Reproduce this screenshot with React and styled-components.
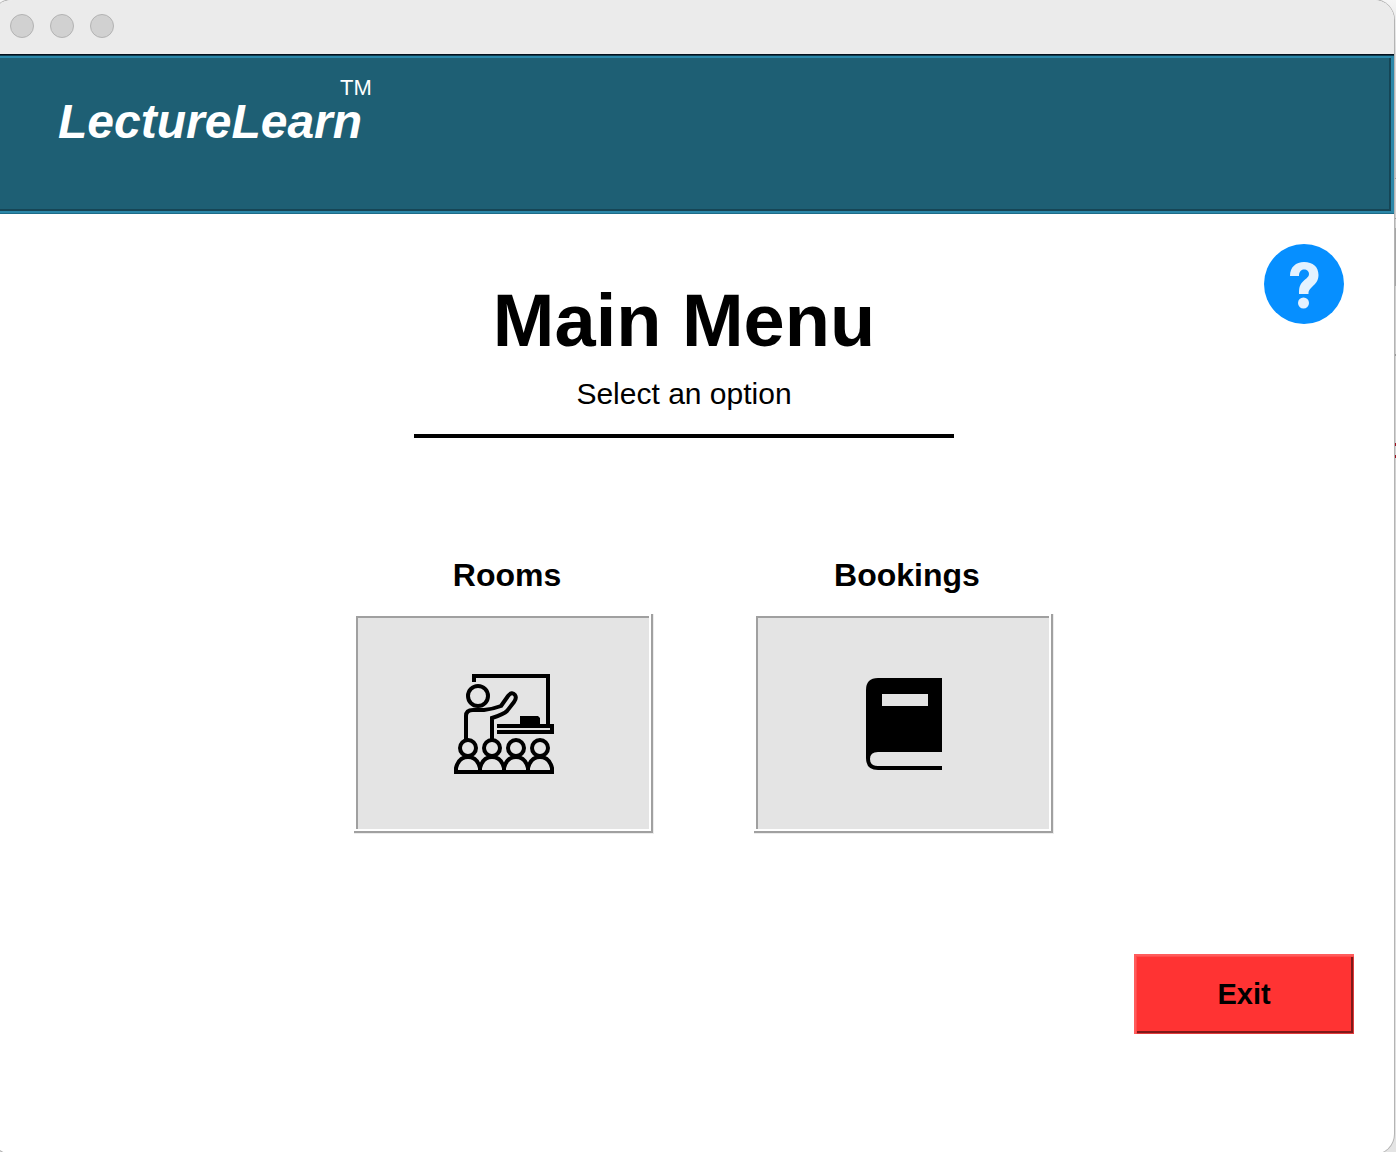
import React from "react";
import styled, { createGlobalStyle } from "styled-components";

const GlobalStyle = createGlobalStyle`
  * { box-sizing: border-box; }
  html { overflow: hidden; }
  body {
    margin: 0;
    overflow: hidden;
    background: linear-gradient(
      #f6f6f6 0, #dcdcdc 54px, #c4c4c4 178px,
      #9a9a9a 178px, #9a9a9a 179px, #cfcfcf 179px, #cfcfcf 218px,
      #9a9a9a 218px, #9a9a9a 219px, #cfcfcf 219px, #cfcfcf 228px,
      #a6a6a6 228px, #a6a6a6 286px, #cfcfcf 286px, #cfcfcf 354px,
      #9a9a9a 354px, #9a9a9a 356px, #d2d2d2 356px, #d2d2d2 443px,
      #a01020 443px, #a01020 446px, #d2d2d2 446px, #d2d2d2 455px,
      #a01020 455px, #a01020 458px, #d2d2d2 458px, #e4e4e4 1152px
    );
    font-family: "Liberation Sans", Arial, Helvetica, sans-serif;
    color: #000;
  }
`;

const Window = styled.div`
  display: flex;
  flex-direction: column;
  min-height: calc(100vh + 2px);
  margin: 0 2px 0 -8px;
  border-radius: 20px;
  overflow: hidden;
  background: #fff;
  box-shadow: 0 0 0 1px #b4b4b4;
`;

const TitleBar = styled.div`
  display: flex;
  align-items: center;
  gap: 16px;
  height: 54px;
  padding: 0 18px 2px;
  background: #ebebeb;
`;

const WindowButton = styled.button`
  width: 24px;
  height: 24px;
  padding: 0;
  border: 1px solid #b3b3b3;
  border-radius: 50%;
  background: #d1d1d1;
`;

const Banner = styled.header`
  height: 160px;
  padding: 24px 66px;
  background: #1e5f74;
  color: #fff;
  box-shadow:
    inset 0 1px #040f1c,
    inset 0 2px #0f3a4c,
    inset 0 -1px #1d6c88,
    inset -3px -3px #2b87a9,
    inset 0 4px #2b87a9,
    inset -5px -5px #164555;
`;

const Brand = styled.div`
  display: flex;
  align-items: flex-start;
`;

const BrandName = styled.span`
  padding-top: 16px;
  font-size: 48px;
  line-height: 56px;
  font-weight: 700;
  font-style: italic;
`;

const Trademark = styled.span`
  margin-left: -22px;
  font-size: 22px;
  line-height: 20px;
`;

const Main = styled.main`
  display: flex;
  flex-direction: column;
`;

const Hero = styled.section`
  display: grid;
  padding: 30px 50px 0 0;
`;

const HelpButton = styled.button`
  grid-area: 1 / 1;
  justify-self: end;
  align-self: start;
  width: 80px;
  height: 80px;
  padding: 0;
  border: 0;
  border-radius: 50%;
  background: #068fff;

  svg { display: block; }
`;

const Heading = styled.div`
  grid-area: 1 / 1;
  justify-self: center;
  width: 540px;
  margin-left: 32px;
  padding-top: 34px;
  border-bottom: 4px solid #000;
  text-align: center;
`;

const Title = styled.h1`
  margin: 0;
  font-size: 74px;
  line-height: 86px;
  font-weight: 700;
`;

const Subtitle = styled.p`
  margin: 0;
  padding: 12px 0 22px;
  font-size: 30px;
  line-height: 36px;
`;

const Options = styled.section`
  display: flex;
  justify-content: center;
  gap: 100px;
  padding: 118px 0 0 22px;
`;

const Option = styled.div`
  display: flex;
  flex-direction: column;
  gap: 20px;
  width: 300px;
`;

const OptionLabel = styled.label`
  padding-left: 6px;
  font-size: 32px;
  line-height: 38px;
  font-weight: 700;
  text-align: center;
`;

const OptionButton = styled.button`
  display: flex;
  align-items: center;
  justify-content: center;
  height: 220px;
  padding: 0;
  border: 0;
  background: #e4e4e4;
  box-shadow:
    inset -1px -1px #ececec,
    inset -3px -3px #a0a0a0,
    inset 2px 2px #fff,
    inset -5px -5px #fff,
    inset 4px 4px #a0a0a0;
`;

const Footer = styled.footer`
  display: flex;
  justify-content: flex-end;
  padding: 120px 40px;
`;

const ExitButton = styled.button`
  width: 220px;
  height: 80px;
  padding: 0;
  border: 0;
  background: #ff3333;
  box-shadow:
    inset 2px 2px #ff5c5c,
    inset 3px 3px #ff4b4b,
    inset -1px -1px #e03a3a,
    inset -3px -3px #7f1919;
  color: #000;
  font-family: inherit;
  font-size: 29px;
  line-height: 34px;
  font-weight: 700;
`;

const audience = [14, 38, 62, 86];

function LectureIcon() {
  return (
    <svg width="100" height="100" viewBox="0 0 100 100" fill="none" stroke="#000" strokeWidth="4" aria-hidden="true">
      <path d="M20 8V2H94V51" />
      <circle cx="24" cy="22" r="10" />
      <path d="M12 66V42Q12 36 19 36H30Q39 35 47 32L54 22Q58 17 61 21Q63 24 60 28L53 37Q50 40 38 44V66" />
      <path d="M43 52H98V58H43" />
      <path d="M66 42H84L86 44V50H66Z" fill="#000" stroke="none" />
      {audience.map((x) => (
        <React.Fragment key={x}>
          <circle cx={x} cy="74" r="8" />
          <path d={`M${x - 12} 98V94C${x - 10} 86 ${x - 6} 83 ${x} 83S${x + 10} 86 ${x + 12} 94V98Z`} />
        </React.Fragment>
      ))}
    </svg>
  );
}

function BookIcon() {
  return (
    <svg width="76" height="92" viewBox="0 0 76 92" aria-hidden="true">
      <path
        fillRule="evenodd"
        d="M12 0H76V74H12Q4 74 4 81T12 88H76V92H12Q0 92 0 80V12Q0 0 12 0ZM16 16V28H62V16Z"
      />
    </svg>
  );
}

function QuestionIcon() {
  return (
    <svg width="80" height="80" viewBox="0 0 80 80" aria-hidden="true">
      <path
        d="M26 32C26 23 32 18 40 18C49 18 54.500 23 54.500 31C54.500 37 51 40 48 43C45 46 44.500 47 44.500 50H35C35 44 35.500 41 39 37.500C42.500 34 45 33 45 30C45 27.500 43 25.500 40 25.500C37 25.500 35 28 35 32Z"
        fill="#e4f2ff"
      />
      <circle cx="39.500" cy="59" r="5.500" fill="#e4f2ff" />
    </svg>
  );
}

export default function App() {
  return (
    <>
      <GlobalStyle />
      <Window>
        <TitleBar>
          <WindowButton aria-label="Close" />
          <WindowButton aria-label="Minimize" />
          <WindowButton aria-label="Zoom" />
        </TitleBar>
        <Banner>
          <Brand>
            <BrandName>LectureLearn</BrandName>
            <Trademark>TM</Trademark>
          </Brand>
        </Banner>
        <Main>
          <Hero>
            <Heading>
              <Title>Main Menu</Title>
              <Subtitle>Select an option</Subtitle>
            </Heading>
            <HelpButton aria-label="Help">
              <QuestionIcon />
            </HelpButton>
          </Hero>
          <Options>
            <Option>
              <OptionLabel htmlFor="rooms">Rooms</OptionLabel>
              <OptionButton id="rooms">
                <LectureIcon />
              </OptionButton>
            </Option>
            <Option>
              <OptionLabel htmlFor="bookings">Bookings</OptionLabel>
              <OptionButton id="bookings">
                <BookIcon />
              </OptionButton>
            </Option>
          </Options>
          <Footer>
            <ExitButton>Exit</ExitButton>
          </Footer>
        </Main>
      </Window>
    </>
  );
}
